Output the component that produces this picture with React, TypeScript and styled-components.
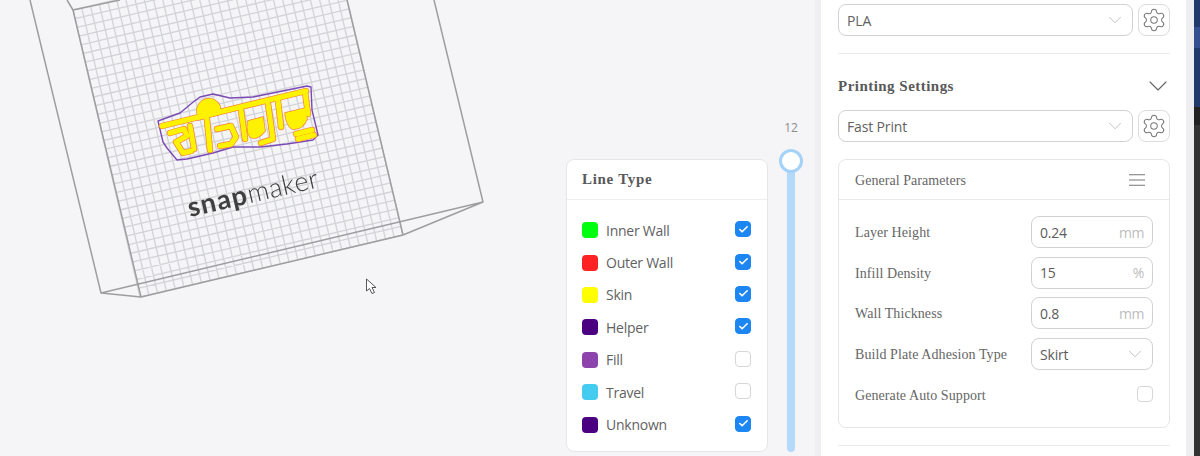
import React from "react";
import styled, { createGlobalStyle } from "styled-components";
import { Settings, ChevronDown, Check } from "lucide-react";

const Global = createGlobalStyle`
  html, body { margin: 0; padding: 0; background: #f5f5f7; }
  * { box-sizing: border-box; }
`;

const SANS = `"Open Sans", "Noto Sans", sans-serif`;
const SERIF = `"Liberation Serif", serif`;

const Page = styled.div`
  display: flex;
  width: 1200px;
  height: 456px;
  overflow: hidden;
  background: #f5f5f7;
  font-family: ${SANS};
  color: #595959;
`;

const Viewport = styled.div`
  position: relative;
  flex: none;
  width: 815px;
  height: 456px;
`;

const Scene = styled.svg`
  position: absolute;
  inset: 0;
  filter: blur(0.35px);
`;

const Legend = styled.section`
  position: absolute;
  left: 566px;
  top: 159px;
  width: 202px;
  height: 293px;
  background: #fff;
  border: 1px solid #e6e6e8;
  border-radius: 8px;
`;

const LegendTitle = styled.h3`
  margin: 0;
  height: 40px;
  padding: 0 15px;
  display: flex;
  align-items: center;
  font: bold 15px ${SERIF};
  letter-spacing: 0.7px;
  color: #595959;
  border-bottom: 1px solid #eeeeee;
`;

const LegendList = styled.ul`
  list-style: none;
  margin: 0;
  padding: 14px 16px 0 15px;
  display: flex;
  flex-direction: column;
`;

const LegendRow = styled.li`
  display: flex;
  align-items: center;
  height: 32.4px;
  font-size: 14px;
  letter-spacing: -0.25px;
  color: #626262;
`;

const Swatch = styled.span<{ $color: string }>`
  flex: none;
  width: 16px;
  height: 16px;
  border-radius: 4px;
  margin-right: 8px;
  background: ${(p) => p.$color};
`;

const LegendName = styled.span`
  flex: 1;
`;

const Box = styled.span<{ $on?: boolean }>`
  flex: none;
  display: flex;
  align-items: center;
  justify-content: center;
  width: 16px;
  height: 16px;
  margin-top: -2px;
  border-radius: 4px;
  background: ${(p) => (p.$on ? "#1c87f3" : "#fff")};
  border: 1px solid ${(p) => (p.$on ? "#1c87f3" : "#d6d6d6")};
  color: #fff;
`;

const SliderWrap = styled.div`
  position: absolute;
  left: 779px;
  top: 120px;
  width: 24px;
  height: 332px;
  display: flex;
  flex-direction: column;
  align-items: center;
`;

const SliderValue = styled.span`
  font-size: 12px;
  line-height: 16px;
  color: #8c8c8c;
`;

const SliderTrack = styled.div`
  position: relative;
  flex: 1;
  width: 8px;
  margin-top: 21px;
  border-radius: 4px;
  background: #b5d9fb;
`;

const SliderThumb = styled.span`
  position: absolute;
  left: -8px;
  top: -8px;
  width: 24px;
  height: 24px;
  border-radius: 50%;
  background: #fff;
  border: 3px solid #a5d2f8;
`;

const Panel = styled.aside`
  flex: none;
  width: 379px;
  height: 456px;
  padding: 4px 16px 0 17px;
  background: #fff;
  border-left: 6px solid #efeff1;
  border-right: 8px solid #eeeef0;
  overflow: hidden;
`;

const Strip = styled.div`
  flex: none;
  width: 6px;
  height: 456px;
  background: linear-gradient(
    to bottom,
    #1f3a6b 0,
    #1f3a6b 27px,
    #34508f 27px,
    #34508f 48px,
    #1f3a6b 48px,
    #1f3a6b 107px,
    #222 107px,
    #222 125px,
    #333 125px
  );
`;

const PickRow = styled.div`
  display: flex;
  gap: 5px;
`;

const Select = styled.div`
  flex: 1;
  height: 32px;
  display: flex;
  align-items: center;
  justify-content: space-between;
  padding: 0 6px 0 8px;
  background: #fff;
  border: 1px solid #d2d2d2;
  border-radius: 8px;
  font-size: 14px;
  letter-spacing: -0.15px;
  color: #626262;
`;

const GearButton = styled.button`
  flex: none;
  width: 32px;
  height: 32px;
  padding: 0;
  display: flex;
  align-items: center;
  justify-content: center;
  background: #fff;
  border: 1px solid #dcdcdc;
  border-radius: 8px;
  color: #777;
`;

const Divider = styled.hr<{ $top: number }>`
  margin: ${(p) => p.$top}px 0 0;
  border: 0;
  height: 1px;
  background: #ebebeb;
`;

const SectionHead = styled.header`
  display: flex;
  align-items: center;
  justify-content: space-between;
  height: 32px;
  margin: 16px -4px 8px 0;
`;

const SectionTitle = styled.h2`
  margin: 0;
  font: bold 15px ${SERIF};
  letter-spacing: 0.47px;
  color: #595959;
`;

const Card = styled.section`
  margin-top: 17px;
  height: 269px;
  border: 1px solid #e6e6e6;
  border-radius: 8px;
`;

const CardHead = styled.header`
  height: 40px;
  display: flex;
  align-items: center;
  justify-content: space-between;
  padding: 0 24px 0 16px;
  border-bottom: 1px solid #e8e8e8;
  font: 14px ${SERIF};
  letter-spacing: 0.05px;
  color: #666;
`;

const CardBody = styled.div`
  display: flex;
  flex-direction: column;
  gap: 8.7px;
  padding: 16px 16px 0;
`;

const ParamRow = styled.div`
  height: 32px;
  display: flex;
  align-items: center;
  justify-content: space-between;
  font: 14px ${SERIF};
  letter-spacing: 0.08px;
  color: #666;
`;

const Label = styled.span`
  padding-top: 2px;
`;

const Field = styled.div`
  width: 122px;
  height: 32px;
  display: flex;
  align-items: center;
  justify-content: space-between;
  padding: 0 8px;
  border: 1px solid #d2d2d2;
  border-radius: 8px;
  font: 14px ${SANS};
  letter-spacing: -0.2px;
  color: #5c5c5c;
`;

const Unit = styled.span`
  font-size: 14px;
  letter-spacing: -0.4px;
  color: #bdbdbd;
`;

const FieldChevron = styled.span`
  display: flex;
  margin-right: -2px;
`;

const gridLines = () => {
  const tl = [73, 10], tr = [335, -52], br = [403, 235], bl = [140, 297];
  const mix = (a: number[], b: number[], t: number) => [a[0] + (b[0] - a[0]) * t, a[1] + (b[1] - a[1]) * t];
  const out: string[] = [];
  const nx = 30, ny = 33;
  for (let i = 0; i <= nx; i++) {
    const a = mix(tl, tr, i / nx), b = mix(bl, br, i / nx);
    out.push(`M${a[0].toFixed(1)} ${a[1].toFixed(1)}L${b[0].toFixed(1)} ${b[1].toFixed(1)}`);
  }
  for (let j = 0; j <= ny; j++) {
    const a = mix(tl, bl, j / ny), b = mix(tr, br, j / ny);
    out.push(`M${a[0].toFixed(1)} ${a[1].toFixed(1)}L${b[0].toFixed(1)} ${b[1].toFixed(1)}`);
  }
  return out.join("");
};

const modelStrokes = [
  "M162 126L306 91",
  "M170 133L184 129L187 136L176 142L183 153L191 151",
  "M190 126L194 149",
  "M206 110L210 150",
  "M217 129L231 126L236 137L231 144L220 146",
  "M241 110L245 139",
  "M268 104L273 139L261 143",
  "M278 101L281 127",
  "M305 92L308 114",
  "M296 134L312 130",
  "M298 139L314 135",
];

const modelBlobs = [
  "M248 121L263 117L265 131Q257 141 250 137Q246 131 248 121Z",
  "M285 113L305 108L307 119Q303 130 292 129Q286 125 285 113Z",
  "M197 112A12 12 0 0 1 220 106L221 114L198 120Z",
];

const Model = () => (
  <g>
    <path
      d="M158 121L180 113L192 103L200 97L213 94L230 98L253 97L307 86L311 87L312 110L318 135L313 140L287 144L260 147L233 147L213 153L187 159L177 160L167 148L163 142Z"
      fill="none"
      stroke="#7a4bb5"
      strokeWidth="1.4"
      strokeLinejoin="round"
    />
    {modelBlobs.map((d) => (
      <path key={d} d={d} fill="#fff200" stroke="#f4803a" strokeWidth="1.4" />
    ))}
    {modelStrokes.map((d) => (
      <path key={d} d={d} fill="none" stroke="#f4803a" strokeWidth="6.4" strokeLinecap="round" strokeLinejoin="round" />
    ))}
    {modelStrokes.map((d) => (
      <path key={d + "y"} d={d} fill="none" stroke="#fff200" strokeWidth="5" strokeLinecap="round" strokeLinejoin="round" />
    ))}
    {modelBlobs.map((d) => (
      <path key={d + "f"} d={d} fill="#fff200" />
    ))}
  </g>
);

const lineTypes: { name: string; color: string; on: boolean }[] = [
  { name: "Inner Wall", color: "#00ff0f", on: true },
  { name: "Outer Wall", color: "#ff2222", on: true },
  { name: "Skin", color: "#ffff00", on: true },
  { name: "Helper", color: "#4b0082", on: true },
  { name: "Fill", color: "#8e44ad", on: false },
  { name: "Travel", color: "#44ccf0", on: false },
  { name: "Unknown", color: "#4b0082", on: true },
];

const params = [
  { label: "Layer Height", value: "0.24", unit: "mm" },
  { label: "Infill Density", value: "15", unit: "%" },
  { label: "Wall Thickness", value: "0.8", unit: "mm" },
];

const Chevron = () => <ChevronDown size={22} strokeWidth={0.75} color="#a8a8a8" />;
const Gear = () => <Settings size={26} strokeWidth={0.95} />;

export default function App() {
  return (
    <Page>
      <Global />
      <Viewport>
        <Scene width="815" height="456" viewBox="0 0 815 456">
          <path d={gridLines()} fill="none" stroke="#d3d4d7" strokeWidth="1.35" />
          <path
            d="M30 0L101 293L141 297L403 235L483 202L434 0M101 293L483 202M67 0L73 10L120 0M73 10L141 297M347 0L403 235"
            fill="none"
            stroke="#9e9ea1"
            strokeWidth="1.5"
            strokeLinejoin="round"
          />
          <Model />
          <g transform="translate(190 217) rotate(-13)" fill="#3f3f3f" fontFamily="Lato, sans-serif">
            <text fontSize="27" fontWeight="700" textLength="60" lengthAdjust="spacing">snap</text>
            <text x="61" fontSize="27" fontWeight="300" textLength="72" lengthAdjust="spacing">maker</text>
          </g>
          <path
            d="M366.5 279L366.5 291L369.5 288.5L372 293.5L374.5 292.5L372 287.5L376 287.5Z"
            fill="#fff"
            stroke="#555"
            strokeWidth="1"
            strokeLinejoin="round"
          />
        </Scene>

        <Legend>
          <LegendTitle>Line Type</LegendTitle>
          <LegendList>
            {lineTypes.map((t) => (
              <LegendRow key={t.name}>
                <Swatch $color={t.color} />
                <LegendName>{t.name}</LegendName>
                <Box $on={t.on}>{t.on && <Check size={11} strokeWidth={3.5} />}</Box>
              </LegendRow>
            ))}
          </LegendList>
        </Legend>

        <SliderWrap>
          <SliderValue>12</SliderValue>
          <SliderTrack>
            <SliderThumb />
          </SliderTrack>
        </SliderWrap>
      </Viewport>

      <Panel>
        <PickRow>
          <Select>
            PLA
            <Chevron />
          </Select>
          <GearButton>
            <Gear />
          </GearButton>
        </PickRow>
        <Divider $top={17} />

        <SectionHead>
          <SectionTitle>Printing Settings</SectionTitle>
          <ChevronDown size={32} strokeWidth={0.85} color="#666" />
        </SectionHead>

        <PickRow>
          <Select>
            Fast Print
            <Chevron />
          </Select>
          <GearButton>
            <Gear />
          </GearButton>
        </PickRow>

        <Card>
          <CardHead>
            <Label>General Parameters</Label>
            <svg width="16" height="12" viewBox="0 0 16 12">
              <path d="M0 .7H16M0 6H16M0 11.3H16" stroke="#777" strokeWidth="1.1" />
            </svg>
          </CardHead>
          <CardBody>
            {params.map((p) => (
              <ParamRow key={p.label}>
                <Label>{p.label}</Label>
                <Field>
                  {p.value}
                  <Unit>{p.unit}</Unit>
                </Field>
              </ParamRow>
            ))}
            <ParamRow>
              <Label>Build Plate Adhesion Type</Label>
              <Field>
                Skirt
                <FieldChevron>
                  <Chevron />
                </FieldChevron>
              </Field>
            </ParamRow>
            <ParamRow>
              <Label>Generate Auto Support</Label>
              <Box />
            </ParamRow>
          </CardBody>
        </Card>
        <Divider $top={17} />
      </Panel>
      <Strip />
    </Page>
  );
}
